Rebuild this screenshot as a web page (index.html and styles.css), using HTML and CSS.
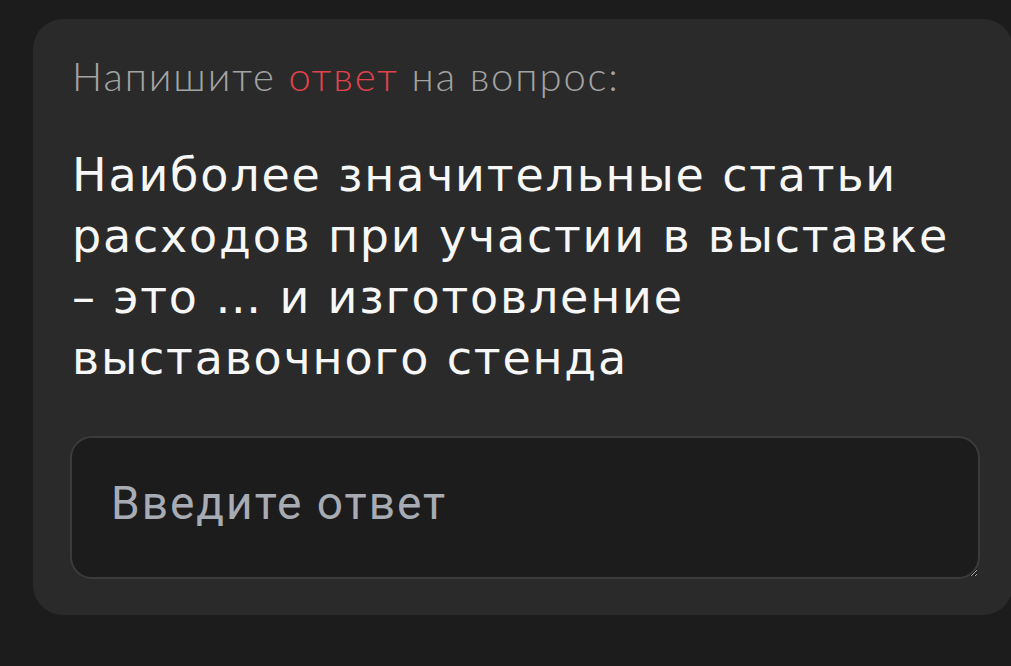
FILE: index.html
```html
<!DOCTYPE html>
<html lang="ru">
<head>
    <meta charset="UTF-8">
    <meta name="viewport" content="width=device-width, initial-scale=1.0">
    <title>Вопрос</title>
    <link rel="stylesheet" href="styles.css">
</head>
<body>
    <div class="question-card">
        <div class="hint">Напишите <span class="accent">ответ</span> на вопрос:</div>
        <div class="question">Наиболее значительные статьи расходов при участии в выставке –&nbsp;это … и изготовление выставочного стенда</div>
        <textarea class="answer" placeholder="Введите ответ"></textarea>
    </div>
</body>
</html>
```

FILE: styles.css
```css
body {
    margin: 0;
    padding: 19px 0 0 33px;
    background-color: #1c1c1c;
    overflow: hidden;
}
.question-card {
    width: 980px;
    height: 596px;
    box-sizing: border-box;
    padding: 37px 0 0 39px;
    background-color: #2a2a2a;
    border-radius: 30px;
}
.hint {
    font-family: 'Lato', sans-serif;
    font-weight: 300;
    font-size: 40px;
    line-height: 40px;
    letter-spacing: 1.9px;
    color: #a3a3a3;
}
.accent {
    color: #e0434b;
}
.question {
    width: 910px;
    margin-top: 49px;
    font-family: 'DejaVu Sans', sans-serif;
    font-size: 46px;
    line-height: 61px;
    letter-spacing: 1.8px;
    color: #f7f7f7;
}
.answer {
    display: block;
    width: 910px;
    height: 143px;
    box-sizing: border-box;
    margin: 47px 0 0 -2px;
    padding: 38px 39px;
    background-color: #1c1c1c;
    border: 2px solid #3b3b3b;
    border-radius: 22px;
    font-family: 'Roboto', sans-serif;
    font-size: 46px;
    line-height: 54px;
    letter-spacing: 2px;
    color: #ffffff;
    outline: none;
}
.answer::placeholder {
    color: #a7abb3;
}
```
